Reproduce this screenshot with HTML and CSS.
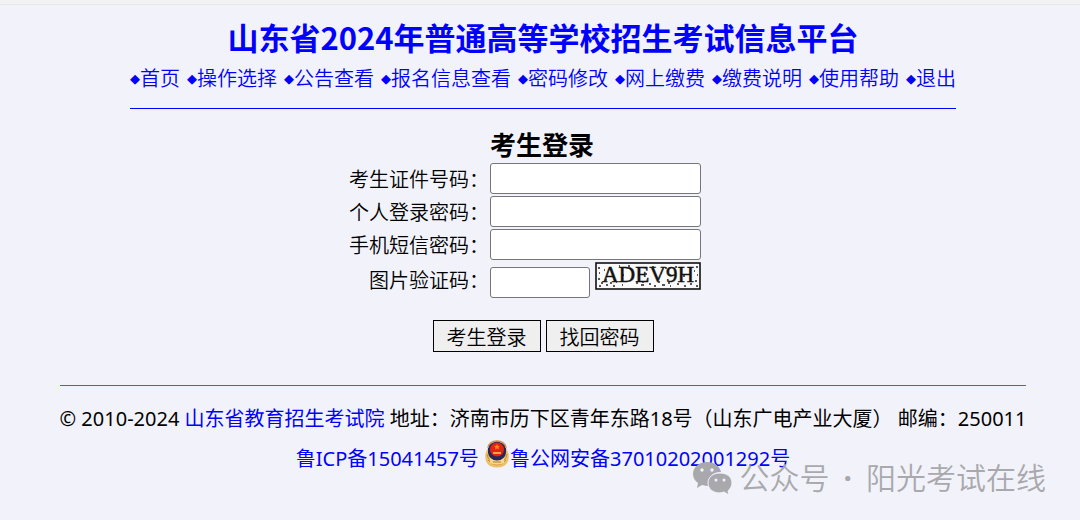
FILE: index.html
```html
<!DOCTYPE html>
<html lang="zh-CN">
<head>
<meta charset="utf-8">
<title>山东省2024年普通高等学校招生考试信息平台</title>
<link rel="stylesheet" href="styles.css">
</head>
<body>
<div class="topbar"></div>
<div class="page">
  <header class="header">
    <h1 class="title">山东省2024年普通高等学校招生考试信息平台</h1>
    <nav class="nav">
      <a href="#"><span class="mark">◆</span>首页</a>
      <a href="#"><span class="mark">◆</span>操作选择</a>
      <a href="#"><span class="mark">◆</span>公告查看</a>
      <a href="#"><span class="mark">◆</span>报名信息查看</a>
      <a href="#"><span class="mark">◆</span>密码修改</a>
      <a href="#"><span class="mark">◆</span>网上缴费</a>
      <a href="#"><span class="mark">◆</span>缴费说明</a>
      <a href="#"><span class="mark">◆</span>使用帮助</a>
      <a href="#"><span class="mark">◆</span>退出</a>
    </nav>
  </header>

  <form class="login">
    <div class="fields">
      <h2 class="heading">考生登录</h2>
      <label for="idno">考生证件号码：</label>
      <input class="field" id="idno" type="text">
      <label for="pwd">个人登录密码：</label>
      <input class="field" id="pwd" type="password">
      <label for="sms">手机短信密码：</label>
      <input class="field" id="sms" type="password">
      <label for="code">图片验证码：</label>
      <div class="code-row">
        <input class="field" id="code" type="text">
        <svg class="captcha" viewBox="0 0 106 28" width="106" height="28">
          <rect x="1" y="1" width="104" height="26" fill="#fafafa" stroke="#111" stroke-width="1.6"/>
          <text class="captcha-text" x="7" y="20">ADEV9H</text>
          <path d="M3 6h2M4 11h1M3 17h2M6 21h2M4 24h2M10 18h2M11 23h2M15 21h2M18 24h2M21 20h1M27 23h1M33 4h2M41 21h2M46 23h3M47 20h2M54 22h2M59 24h2M63 20h2M67 23h3M73 21h2M75 24h1M80 5h2M82 22h2M89 24h2M95 22h2M100 19h2M101 5h2M99 9h1M102 13h1M101 24h2M24 4h1M57 5h2M70 6h2M9 8h1M28 13h1M50 12h2M66 11h1M88 14h2" stroke="#222" stroke-width="1.3"/>
        </svg>
      </div>
    </div>
    <div class="actions">
      <button class="btn" type="button">考生登录</button>
      <button class="btn" type="button">找回密码</button>
    </div>
  </form>

  <footer class="footer">
    <p>© 2010-2024 <a href="#">山东省教育招生考试院</a> 地址：济南市历下区青年东路18号（山东广电产业大厦） 邮编：250011</p>
    <p class="records"><a href="#">鲁ICP备15041457号</a>
      <a href="#"><svg class="badge" viewBox="0 0 26 28" width="26" height="28">
        <path d="M4 8C0 14 0 22 6 26q7 3 14 0c6-4 6-12 2-18l-4 9h-10z" fill="#edc169"/>
        <path d="M3 14q1 7 7 8M23 14q-1 7-7 8M4 20q4 5 9 5t9-5" fill="none" stroke="#c88d38"/>
        <path d="M13 1l5 2 4 3v7q-1 6-9 9-8-3-9-9V6l4-3z" fill="#252858"/>
        <path d="M4 8q1-7 9-7t9 7" fill="none" stroke="#c79a58" stroke-width="1.5"/>
        <circle cx="13" cy="9.500" r="7" fill="#df2419"/>
        <path d="M13 4l1 2h2l-1.500 1.500.5 2-2-1-2 1 .5-2L10 6h2z" fill="#f8802c"/>
        <path d="M9 12h8v2H9z" fill="#f3a431"/>
        <path d="M6 18q7 5 14 0v5q-7 3-14 0z" fill="#f7d78b"/>
        <path d="M9 22h8" stroke="#b87732"/>
      </svg>鲁公网安备37010202001292号</a></p>
  </footer>
</div>
<div class="watermark">
  <svg viewBox="0 0 40 34" width="40" height="34">
    <path d="M15 1C7 1 1 6 1 13c0 4 2 7 5 9l-1 5 5-3 5 1h2C15 17 20 11 29 11 28 5 22 1 15 1z" fill="#a9a9ad"/>
    <path d="M28 12c-7 0-12 4-12 10s5 10 12 10l4-1 5 3-1-4c2-2 4-5 4-8 0-6-5-10-12-10z" fill="#a9a9ad" stroke="#f2f3fa"/>
    <g fill="#f2f3fa"><circle cx="10" cy="9" r="1.700"/><circle cx="20" cy="9" r="1.700"/><circle cx="24" cy="19" r="1.500"/><circle cx="32" cy="19" r="1.500"/></g>
  </svg>
  <span>公众号</span><span class="dot">·</span><span>阳光考试在线</span>
</div>
</body>
</html>
```
FILE: styles.css
```css
* { box-sizing: border-box; }
body {
  margin: 0;
  background: #f2f3fa;
  color: #000;
  font: 350 20px/30px "Noto Sans", "Noto Sans CJK SC", sans-serif;
}
a { color: #00f; text-decoration: none; }
h1, h2, p { margin: 0; }
.topbar {
  height: 5px;
  background: #f2f2f2;
  border-bottom: 1px solid #e8e8ea;
}
.page {
  display: flex;
  flex-direction: column;
  align-items: center;
  padding: 9px 0 0 6px;
}
.header {
  text-align: center;
  padding-bottom: 14px;
  border-bottom: 1px solid #00f;
}
.title {
  margin-bottom: 4px;
  color: #00f;
  font: bold 31px/46px "Noto Sans CJK SC", sans-serif;
}
.nav { display: flex; gap: 7px; white-space: nowrap; }
.nav a { display: flex; align-items: center; }
.mark {
  width: 10px;
  font: 13px/30px "DejaVu Sans", sans-serif;
}
.login { padding-top: 20px; }
.fields {
  display: grid;
  grid-template-columns: 140px 211px;
  column-gap: 1px;
  row-gap: 2px;
  align-items: center;
  padding-right: 36px;
}
.fields label {
  padding-top: 2px;
  line-height: 28px;
  text-align: right;
  white-space: nowrap;
}
.heading {
  grid-column: 2;
  font-size: 26px;
  line-height: 32px;
}
.field {
  width: 100%;
  height: 31px;
  padding: 1px 4px;
  border: 1px solid #767676;
  border-radius: 3px;
  background: #fff;
  font: inherit;
}
.code-row {
  display: flex;
  align-items: flex-start;
  gap: 5px;
}
.code-row .field { width: 100px; margin-top: 5px; }
.captcha-text { font: 23px "Liberation Serif", serif; fill: #111; stroke: #111; stroke-width: 0.5px; }
.actions {
  display: flex;
  justify-content: center;
  gap: 5px;
  padding: 22px 0 33px;
}
.btn {
  height: 32px;
  padding: 2px 13px 0;
  border: 1px solid #000;
  background: #efefef;
  color: #000;
  font: inherit;
}
.footer {
  padding-top: 13px;
  border-top: 1px solid #55f;
  text-align: center;
  font-weight: 400;
  line-height: 40px;
}
.badge { vertical-align: -2px; }
.watermark {
  position: absolute;
  right: 34px;
  bottom: 22px;
  display: flex;
  align-items: center;
  gap: 8px;
  color: #a9a9ad;
  font-size: 30px;
  line-height: 40px;
}
.dot { padding: 0 6px; font-weight: 700; }
```
